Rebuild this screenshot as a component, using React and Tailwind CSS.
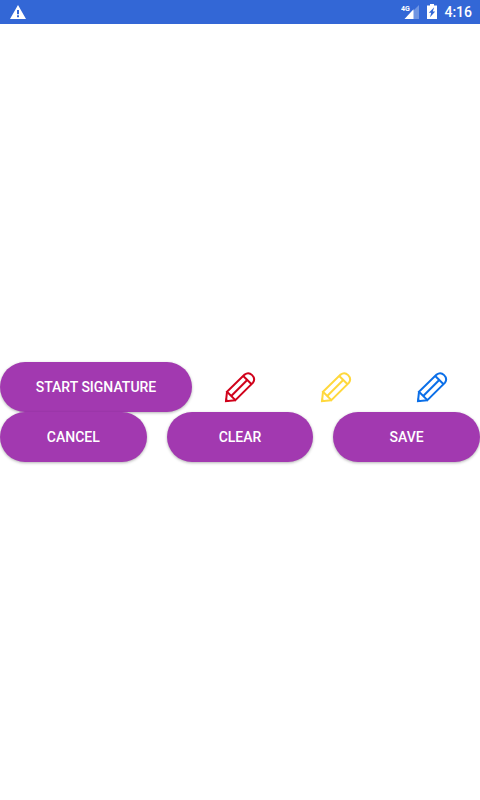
import React from "react";

function StatusBar() {
  return (
    <header className="flex h-6 shrink-0 items-center justify-between bg-[#3367d6] pr-2 pl-2.5 text-white">
      <svg className="h-4 w-4" viewBox="0 0 16 16" role="img" aria-label="Warning">
        <path
          fill="currentColor"
          fillRule="evenodd"
          d="M8 1 L16 15 H0 Z M7 6 V10.2 H9 V6 Z M7 11.2 V13.2 H9 V11.2 Z"
        />
      </svg>
      <div className="flex items-center">
        <svg className="h-4 w-[18px]" viewBox="0 0 18 16" role="img" aria-label="4G signal">
          <path d="M18 1 V15 H4 Z" fill="#fff" fillOpacity="0.3" />
          <path d="M12.5 5.3 V15 H3.5 Z" fill="#fff" />
          <path d="M0 0 H9 V7.5 H0 Z" fill="#3367d6" />
          <text x="0" y="7" fill="#fff" fontSize="7" fontWeight="700" fontFamily="Roboto, sans-serif">
            4G
          </text>
        </svg>
        <svg className="mr-1.5 ml-[7px] h-4 w-3" viewBox="0 1 12 16" role="img" aria-label="Battery charging">
          <path
            fill="currentColor"
            fillRule="evenodd"
            d="M4 1 H8 V2.5 H11 V16 H1 V2.5 H4 Z M8.2 4.2 L2.8 9.8 H5.2 L4 14.2 L9.2 8.6 H6.8 Z"
          />
        </svg>
        <span className="text-sm leading-6 font-medium">4:16</span>
      </div>
    </header>
  );
}

function ActionButton({ children, className = "" }) {
  return (
    <button
      type="button"
      className={`h-[50px] rounded-full bg-[#a239b0] text-sm font-medium text-white shadow-[0_1px_3px_rgba(0,0,0,0.3)] ${className}`}
    >
      {children}
    </button>
  );
}

function PencilButton({ label, className }) {
  return (
    <button type="button" aria-label={label} className={`flex h-[50px] items-center justify-center ${className}`}>
      <svg className="h-8 w-8" viewBox="0 0 32 32" fill="none" stroke="currentColor" strokeWidth="2">
        <path d="M3 20.8 L20.6 3.6 A5.9 5.9 0 0 1 29 11.6 L11.4 29.2 Z" />
        <path d="M3 20.8 L2 30.2 L11.4 29.2" />
        <path d="M19 4.8 L27.6 13.2" />
        <path d="M7.2 25 L23.2 9" />
        <path d="M1.2 31 L1.8 27 L5.2 30.6 Z" fill="currentColor" stroke="none" />
      </svg>
    </button>
  );
}

export default function App() {
  return (
    <div className="flex min-h-screen flex-col bg-white font-[Roboto,sans-serif]">
      <StatusBar />
      <main className="flex flex-1 flex-col justify-center">
        <div className="grid grid-cols-5">
          <ActionButton className="col-span-2">START SIGNATURE</ActionButton>
          <PencilButton label="Red pen" className="text-[#d0021b]" />
          <PencilButton label="Yellow pen" className="text-[#ffd83d]" />
          <PencilButton label="Blue pen" className="text-[#0b6fe8]" />
        </div>
        <div className="grid grid-cols-3 gap-5">
          <ActionButton>CANCEL</ActionButton>
          <ActionButton>CLEAR</ActionButton>
          <ActionButton>SAVE</ActionButton>
        </div>
      </main>
    </div>
  );
}
